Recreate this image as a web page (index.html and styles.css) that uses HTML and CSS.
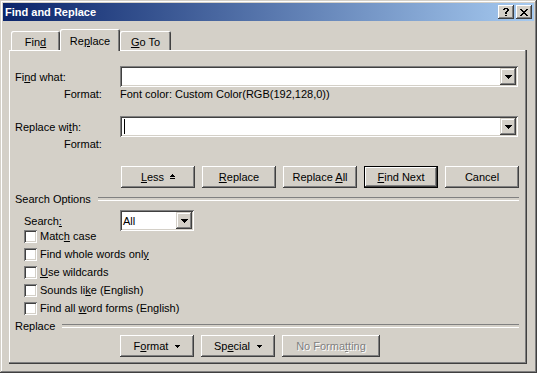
FILE: index.html
```html
<!DOCTYPE html>
<html>
<head>
<meta charset="utf-8">
<title>Find and Replace</title>
<link rel="stylesheet" href="styles.css">
</head>
<body>
<div class="window">
  <div class="titlebar">
    <span class="title">Find and Replace</span>
    <div class="tb-btns">
      <div class="tb-btn"><svg width="6" height="8" viewBox="0 0 6 8"><path d="M1 0h4v1H1z M0 1h2v1H0z M4 1h2v1H4z M4 2h2v1H4z M3 3h2v1H3z M2 4h2v2H2z M2 7h2v1H2z" fill="#000"/></svg></div>
      <div class="tb-btn"><svg width="8" height="7" viewBox="0 0 8 7"><path d="M0 0h2v1H0z M6 0h2v1H6z M1 1h2v1H1z M5 1h2v1H5z M2 2h4v1H2z M3 3h2v1H3z M2 4h4v1H2z M1 5h2v1H1z M5 5h2v1H5z M0 6h2v1H0z M6 6h2v1H6z" fill="#000"/></svg></div>
    </div>
  </div>

  <div class="tabs">
    <div class="tab tab-find">Fin<u>d</u></div>
    <div class="tab tab-replace active">Re<u>p</u>lace</div>
    <div class="tab tab-goto"><u>G</u>o To</div>
  </div>

  <div class="panel">
    <div class="row">
      <div class="lbl">Fi<u>n</u>d what:</div>
      <div class="combo wide">
        <span></span>
        <div class="dd-btn"><svg width="7" height="4" viewBox="0 0 7 4"><path d="M0 0h7v1H0z M1 1h5v1H1z M2 2h3v1H2z M3 3h1v1H3z" fill="#000"/></svg></div>
      </div>
    </div>
    <div class="row fmt">
      <div class="lbl fmt-lbl">Format:</div>
      <div>Font color: Custom Color(RGB(192,128,0))</div>
    </div>

    <div class="row gap-top">
      <div class="lbl">Replace wi<u>t</u>h:</div>
      <div class="combo wide">
        <span class="caret"></span>
        <div class="dd-btn"><svg width="7" height="4" viewBox="0 0 7 4"><path d="M0 0h7v1H0z M1 1h5v1H1z M2 2h3v1H2z M3 3h1v1H3z" fill="#000"/></svg></div>
      </div>
    </div>
    <div class="row fmt">
      <div class="lbl fmt-lbl">Format:</div>
      <div></div>
    </div>

    <div class="btnrow top-btns">
      <div class="btn"><span><u>L</u>ess</span><svg class="less-ico" width="5" height="5" viewBox="0 0 5 5"><path d="M2 0h1v1H2z M1 1h3v1H1z M0 2h5v1H0z M0 4h5v1H0z" fill="#000"/></svg></div>
      <div class="btn"><span><u>R</u>eplace</span></div>
      <div class="btn"><span>Replace <u>A</u>ll</span></div>
      <div class="btn default"><span><u>F</u>ind Next</span></div>
      <div class="btn"><span>Cancel</span></div>
    </div>

    <div class="group group-search"><span>Search Options</span></div>

    <div class="search-row">
      <div class="search-lbl">Search<u>:</u></div>
      <div class="combo small">
        <span class="combo-text">All</span>
        <div class="dd-btn"><svg width="7" height="4" viewBox="0 0 7 4"><path d="M0 0h7v1H0z M1 1h5v1H1z M2 2h3v1H2z M3 3h1v1H3z" fill="#000"/></svg></div>
      </div>
    </div>

    <div class="checks">
      <div class="chk"><span class="box"></span><span>Matc<u>h</u> case</span></div>
      <div class="chk"><span class="box"></span><span>Find whole words onl<u>y</u></span></div>
      <div class="chk"><span class="box"></span><span><u>U</u>se wildcards</span></div>
      <div class="chk"><span class="box"></span><span>Sounds li<u>k</u>e (English)</span></div>
      <div class="chk"><span class="box"></span><span>Find all <u>w</u>ord forms (English)</span></div>
    </div>

    <div class="group group-replace"><span>Replace</span></div>

    <div class="btnrow bottom-btns">
      <div class="btn"><span>F<u>o</u>rmat</span><svg class="dd-ico" width="5" height="3" viewBox="0 0 5 3"><path d="M0 0h5v1H0z M1 1h3v1H1z M2 2h1v1H2z" fill="#000"/></svg></div>
      <div class="btn"><span>Sp<u>e</u>cial</span><svg class="dd-ico" width="5" height="3" viewBox="0 0 5 3"><path d="M0 0h5v1H0z M1 1h3v1H1z M2 2h1v1H2z" fill="#000"/></svg></div>
      <div class="btn disabled wide-btn"><span>No Forma<u>t</u>ting</span></div>
    </div>
  </div>
</div>
</body>
</html>
```

FILE: styles.css
```css
* { box-sizing: border-box; }

body {
  margin: 0;
  background: #D4D0C8;
  font-family: "Liberation Sans", Arial, sans-serif;
  font-size: 11px;
  color: #000;
}

u { text-decoration: underline; text-underline-offset: 1px; }

.window {
  width: 537px;
  height: 373px;
  padding: 3px;
  background: #D4D0C8;
  box-shadow: inset -1px -1px #404040, inset 1px 1px #D4D0C8, inset -2px -2px #808080, inset 2px 2px #fff;
}

.titlebar {
  height: 18px;
  display: flex;
  align-items: center;
  justify-content: space-between;
  padding: 0 2px 0 2px;
  background: linear-gradient(to right, #0A246A, #A6CAF0);
}

.title {
  color: #fff;
  font-weight: bold;
}

.tb-btns { display: flex; gap: 2px; }

.tb-btn {
  width: 16px;
  height: 14px;
  display: flex;
  align-items: center;
  justify-content: center;
  background: #D4D0C8;
  box-shadow: inset -1px -1px #404040, inset 1px 1px #fff, inset -2px -2px #808080;
}

/* Tabs */
.tabs {
  display: flex;
  align-items: flex-end;
  height: 22px;
  margin: 8px 0 -1px 8px;
  position: relative;
  z-index: 1;
}

.tab {
  height: 19px;
  margin-bottom: 1px;
  padding-top: 3px;
  display: flex;
  align-items: center;
  justify-content: center;
  background: #D4D0C8;
  border-radius: 2px 2px 0 0;
  box-shadow: inset 1px 1px #fff, inset -1px 0 #404040, inset -2px 0 #808080;
}

.tab-find { width: 49px; }
.tab-replace { width: 60px; }
.tab-goto { width: 51px; }

.tab.active {
  height: 22px;
  margin-bottom: 0;
  padding-top: 2px;
  position: relative;
  z-index: 2;
}

/* Panel */
.panel {
  height: 314px;
  margin: 0 7px 0 6px;
  padding: 16px 8px 0 6px;
  box-shadow: inset -1px -1px #404040, inset -2px -2px #808080, inset 1px 1px #fff;
}

.row {
  display: flex;
  align-items: center;
}

.lbl { width: 105px; flex: none; }

.fmt { height: 14px; }
.fmt-lbl { padding-left: 49px; }
.gap-top { margin-top: 15px; }

.combo {
  height: 21px;
  padding: 2px;
  display: flex;
  align-items: center;
  justify-content: space-between;
  background: #fff;
  box-shadow: inset 1px 1px #808080, inset -1px -1px #fff, inset 2px 2px #404040, inset -2px -2px #D4D0C8;
}

.combo.wide { width: 398px; }
.combo.small { width: 74px; }

.combo-text { padding-left: 1px; }

.caret {
  width: 1px;
  height: 15px;
  margin-left: 2px;
  background: #000;
}

.dd-btn {
  width: 16px;
  height: 17px;
  display: flex;
  align-items: center;
  justify-content: center;
  background: #D4D0C8;
  box-shadow: inset -1px -1px #404040, inset 1px 1px #D4D0C8, inset -2px -2px #808080, inset 2px 2px #fff;
}

/* Buttons */
.btnrow {
  display: flex;
  gap: 7px;
}

.top-btns { margin-top: 15px; padding-left: 106px; }
.bottom-btns { margin-top: 2px; padding-left: 105px; }

.btn {
  width: 74px;
  height: 22px;
  display: flex;
  align-items: center;
  justify-content: center;
  gap: 6px;
  background: #D4D0C8;
  box-shadow: inset -1px -1px #404040, inset 1px 1px #fff, inset -2px -2px #808080;
}

.btn.default {
  box-shadow: inset 0 0 0 1px #000, inset -2px -2px #404040, inset 2px 2px #fff, inset -3px -3px #808080;
}

.btn.wide-btn { width: 98px; }

.btn.disabled {
  color: #808080;
  text-shadow: 1px 1px 0 #fff;
}

.less-ico { margin-top: -2px; }
.dd-ico { margin-left: 1px; }

/* Group separators */
.group {
  display: flex;
  align-items: center;
  height: 14px;
}

.group::after {
  content: "";
  flex: 1;
  height: 2px;
  margin-left: 7px;
  border-top: 1px solid #808080;
  border-bottom: 1px solid #fff;
}

.group-search { margin-top: 4px; }
.group-replace { margin-top: -1px; }

.search-row {
  display: flex;
  align-items: center;
  margin-top: 4px;
  padding-left: 9px;
}

.search-lbl { width: 96px; }

.checks {
  margin-top: -1px;
  padding-left: 9px;
}

.chk {
  height: 18px;
  display: flex;
  align-items: flex-start;
  gap: 3px;
  line-height: 13px;
}

.box {
  width: 13px;
  height: 13px;
  flex: none;
  background: #fff;
  box-shadow: inset 1px 1px #808080, inset -1px -1px #fff, inset 2px 2px #404040, inset -2px -2px #D4D0C8;
}
```
